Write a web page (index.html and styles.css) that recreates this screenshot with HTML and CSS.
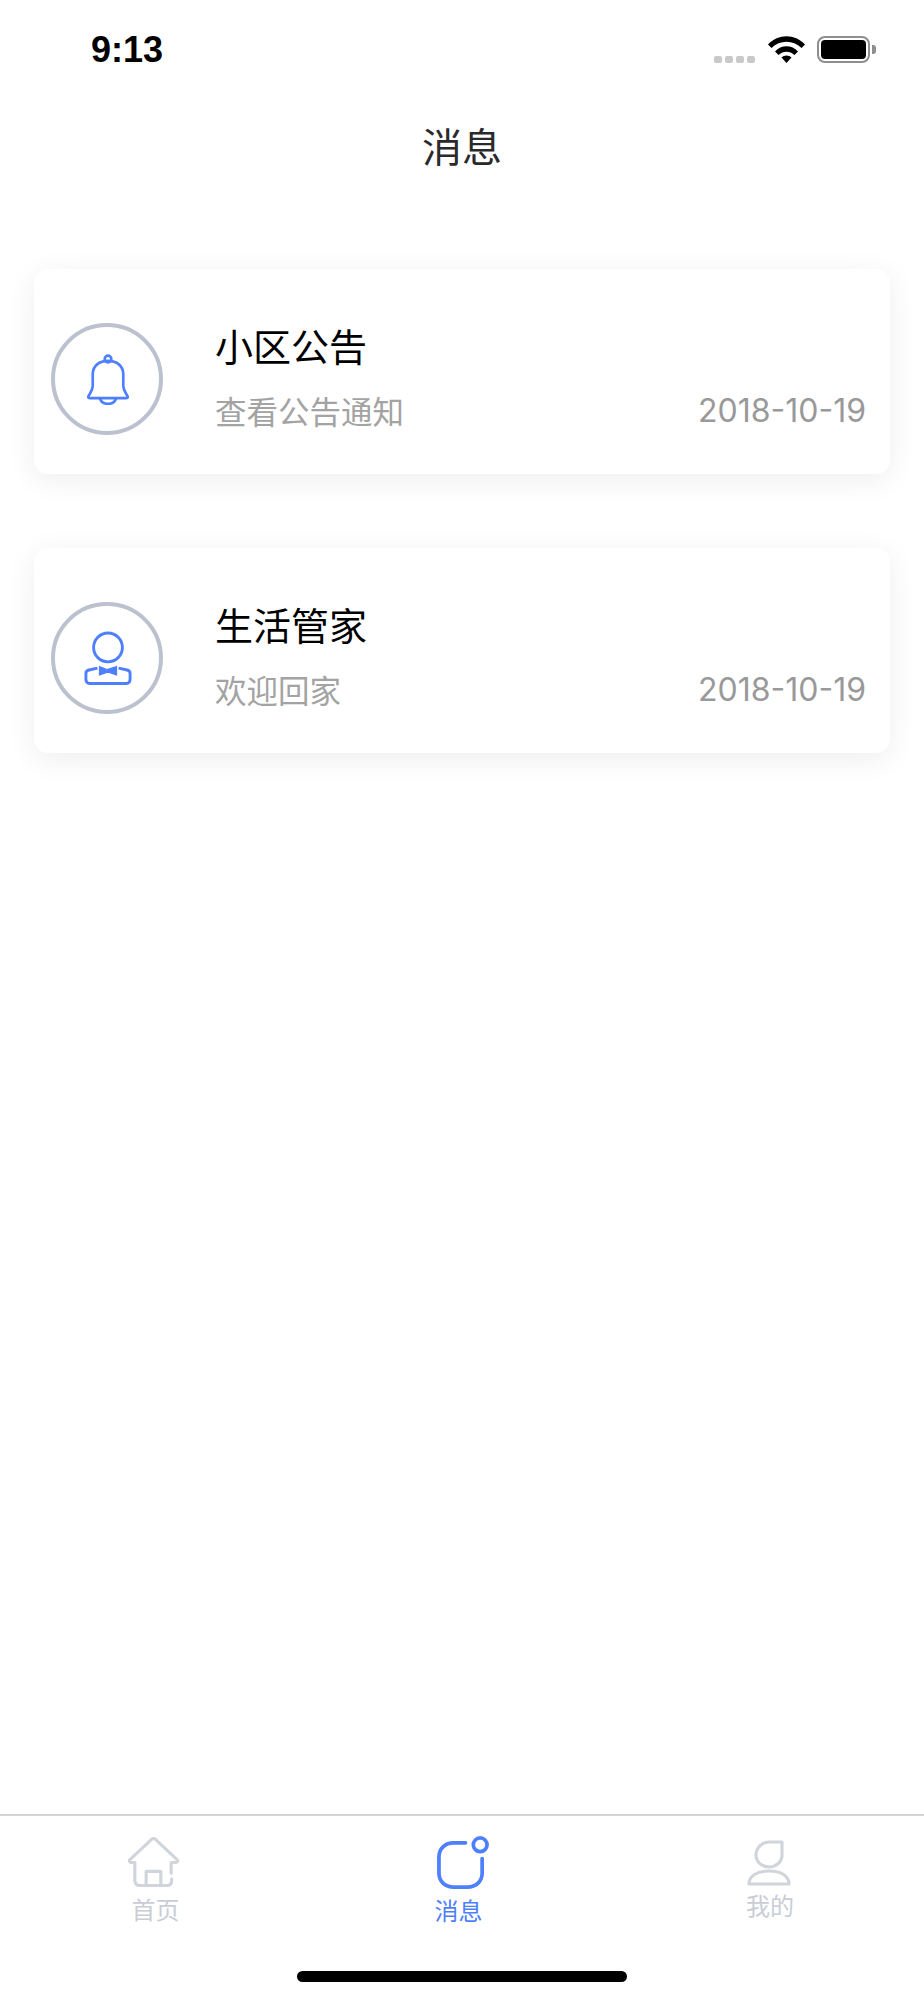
FILE: index.html
```html
<!DOCTYPE html>
<html lang="zh-CN">
<head>
<meta charset="utf-8">
<title>消息</title>
<link rel="stylesheet" href="styles.css">
</head>
<body>
<div class="page">
  <header class="status">
    <span class="time">9:13</span>
    <div class="status-icons">
      <div class="dots"><i></i><i></i><i></i><i></i></div>
      <svg class="wifi" width="37" height="27" viewBox="0 0 37 27"><path d="M0 8.500C10-2.500 27-2.500 37 8.500L33.500 12C25 3.500 12 3.500 3.500 12Z" fill="#000"/><path d="M7 15.500C13 8.500 24 8.500 30 15.500L26.500 19C22 14.500 15 14.500 10.500 19Z" fill="#000"/><path d="M13.500 21.500C16 18.800 21 18.800 23.500 21.500L18.500 27Z" fill="#000"/></svg>
      <div class="battery"><div class="battery-fill"></div></div>
      <div class="battery-nub"></div>
    </div>
  </header>
  <h1 class="nav-title">消息</h1>
  <main class="list">
    <article class="card">
      <div class="avatar">
        <svg class="avatar-icon" width="42" height="51" viewBox="0 0 44 53" fill="none" stroke="#4e7fff" stroke-width="2.800" stroke-linejoin="round"><circle cx="22" cy="5" r="3.500"/><path d="M6 21C6 12 13 7 22 7S38 12 38 21V33C38 38 41 41 42.500 44C43 45.500 42 46 41 46H3C2 46 1 45.500 1.500 44C3 41 6 38 6 33Z"/><path d="M13.500 46C14.500 50 18 52 22 52S29.500 50 30.500 46"/></svg>
      </div>
      <div class="body">
        <h2 class="name">小区公告</h2>
        <div class="meta"><span class="sub">查看公告通知</span><span class="date">2018-10-19</span></div>
      </div>
    </article>
    <article class="card">
      <div class="avatar">
        <svg class="avatar-icon" width="48" height="54" viewBox="0 0 50 56" fill="none" stroke="#4e7fff" stroke-width="3" stroke-linejoin="round"><circle cx="25" cy="17" r="15"/><path d="M14 38.500L5 40.500C3 41 2 42.500 2 44V50C2 53 3.500 54.500 6 54.500H44C46.500 54.500 48 53 48 50V44C48 42.500 47 41 45 40.500L36 38.500"/><path d="M15.500 36L24 39.500L34.500 36V46.500L26 43.500H24L15.500 46.500Z" fill="#4e7fff" stroke="none"/></svg>
      </div>
      <div class="body">
        <h2 class="name">生活管家</h2>
        <div class="meta"><span class="sub">欢迎回家</span><span class="date">2018-10-19</span></div>
      </div>
    </article>
  </main>
  <nav class="tabbar">
    <div class="tab tab-home">
      <svg class="tab-icon" width="51" height="51" viewBox="0 0 52 52" fill="none" stroke="#d0d5dc" stroke-width="3.200" stroke-linecap="round" stroke-linejoin="round"><path d="M44 37V26L49 26C51 25.500 51 24 50 23L28 2.500C26.500 1 25.500 1 24 2.500L2 23C1 24 1 25.500 3 26L7 26V44C7 47.500 9 49.500 12 49.500H40C43 49.500 44.500 47.500 44.500 44V43"/><path d="M18.500 49V35H33.500V49"/></svg>
      <span class="tab-label">首页</span>
    </div>
    <div class="tab tab-msg">
      <svg class="tab-icon" width="53" height="53" viewBox="0 0 54 54" fill="none" stroke="#4e7fff" stroke-width="3.800" stroke-linecap="round"><path d="M29 7H17C8 7 2 13 2 21V38C2 46 8 52 17 52H31C40 52 46 46 46 38V23"/><circle cx="44" cy="9" r="7"/></svg>
      <span class="tab-label tab-label-active">消息</span>
    </div>
    <div class="tab tab-me">
      <svg class="tab-icon" width="44" height="46" viewBox="0 0 44 46" fill="none" stroke="#d0d5dc" stroke-width="3.200" stroke-linejoin="round"><path d="M35 2V15C35 22 29 27 22 27S9 22 9 15 15 2 22 2Z"/><path d="M2 44C2 36 10 31 22 31S42 36 42 44Z"/></svg>
      <span class="tab-label">我的</span>
    </div>
  </nav>
  <div class="home-bar"><div class="home-indicator"></div></div>
</div>
</body>
</html>
```
FILE: styles.css
```css
* { box-sizing: border-box; }
html, body { margin: 0; padding: 0; background: #fff; }
body { font-family: "Noto Sans CJK SC", "Noto Sans", sans-serif; }
.page { width: 924px; height: 2000px; display: flex; flex-direction: column; background: #fff; overflow: hidden; }

.status { height: 100px; display: flex; justify-content: space-between; align-items: flex-start; padding: 30px 48px 0 91px; flex: none; }
.time { font-family: "Liberation Sans", Arial, sans-serif; font-weight: 700; font-size: 36px; line-height: 40px; color: #000; }
.status-icons { display: flex; align-items: flex-end; padding-top: 6px; height: 33px; }
.dots { display: flex; gap: 3px; margin-right: 13px; }
.dots i { width: 8px; height: 7px; border-radius: 2px; background: #c9c9c9; }
.wifi { margin-right: 12px; }
.battery { width: 53px; height: 27px; padding: 2px; border: 2.500px solid #8e8e8e; border-radius: 8px; }
.battery-fill { height: 100%; background: #000; border-radius: 4px; }
.battery-nub { width: 4px; height: 9px; margin: 0 0 9px 2px; border-radius: 0 3px 3px 0; background: #8e8e8e; }

.nav-title { margin: 0; height: 99px; padding-top: 23px; text-align: center; font-weight: 400; font-size: 40px; line-height: 44px; color: #2a2a2a; flex: none; }

.list { flex: 1; padding: 70px 34px 0; display: flex; flex-direction: column; gap: 74px; }
.card { height: 205px; display: flex; align-items: center; padding: 0 24px 0 17px; background: #fff; border-radius: 14px; box-shadow: 0 6px 30px rgba(0, 0, 0, .07); }
.avatar { width: 112px; height: 112px; margin-top: 15px; border: 4px solid #bcc1cf; border-radius: 50%; display: flex; align-items: center; justify-content: center; flex: none; }
.avatar-icon { margin-left: 2px; }
.body { flex: 1; margin: 8px 0 0 52px; display: flex; flex-direction: column; gap: 18px; }
.name { margin: 0; font-weight: 400; font-size: 38px; line-height: 50px; color: #000; }
.meta { display: flex; justify-content: space-between; align-items: center; }
.sub { font-size: 31.500px; line-height: 44px; color: #a3a3a3; }
.date { align-self: flex-end; margin-bottom: -1px; font-family: "Inter", "Noto Sans", sans-serif; font-size: 32px; line-height: 44px; color: #999; }

.tabbar { height: 147px; flex: none; border-top: 2px solid #d4d4d4; display: grid; grid-template-columns: repeat(3, 308px); }
.tab { display: flex; flex-direction: column; align-items: center; }
.tab-home { padding-top: 21px; }
.tab-msg { padding-top: 20px; }
.tab-me { padding-top: 24px; }
.tab-label { font-size: 24px; line-height: 30px; color: #c8cdd6; }
.tab-label-active { color: #4e7fff; margin: 6px 7px 0 0; }
.tab-home .tab-label { margin: 6px 0 0 3px; }
.tab-me .tab-label { margin-top: 4px; }
.tab-home .tab-icon { margin-left: -1px; }
.tab-msg .tab-icon { margin-left: 3px; }
.tab-me .tab-icon { margin-left: -2px; }

.home-bar { height: 39px; flex: none; display: flex; justify-content: center; padding-top: 10px; }
.home-indicator { width: 330px; height: 11px; border-radius: 6px; background: #000; }
```
